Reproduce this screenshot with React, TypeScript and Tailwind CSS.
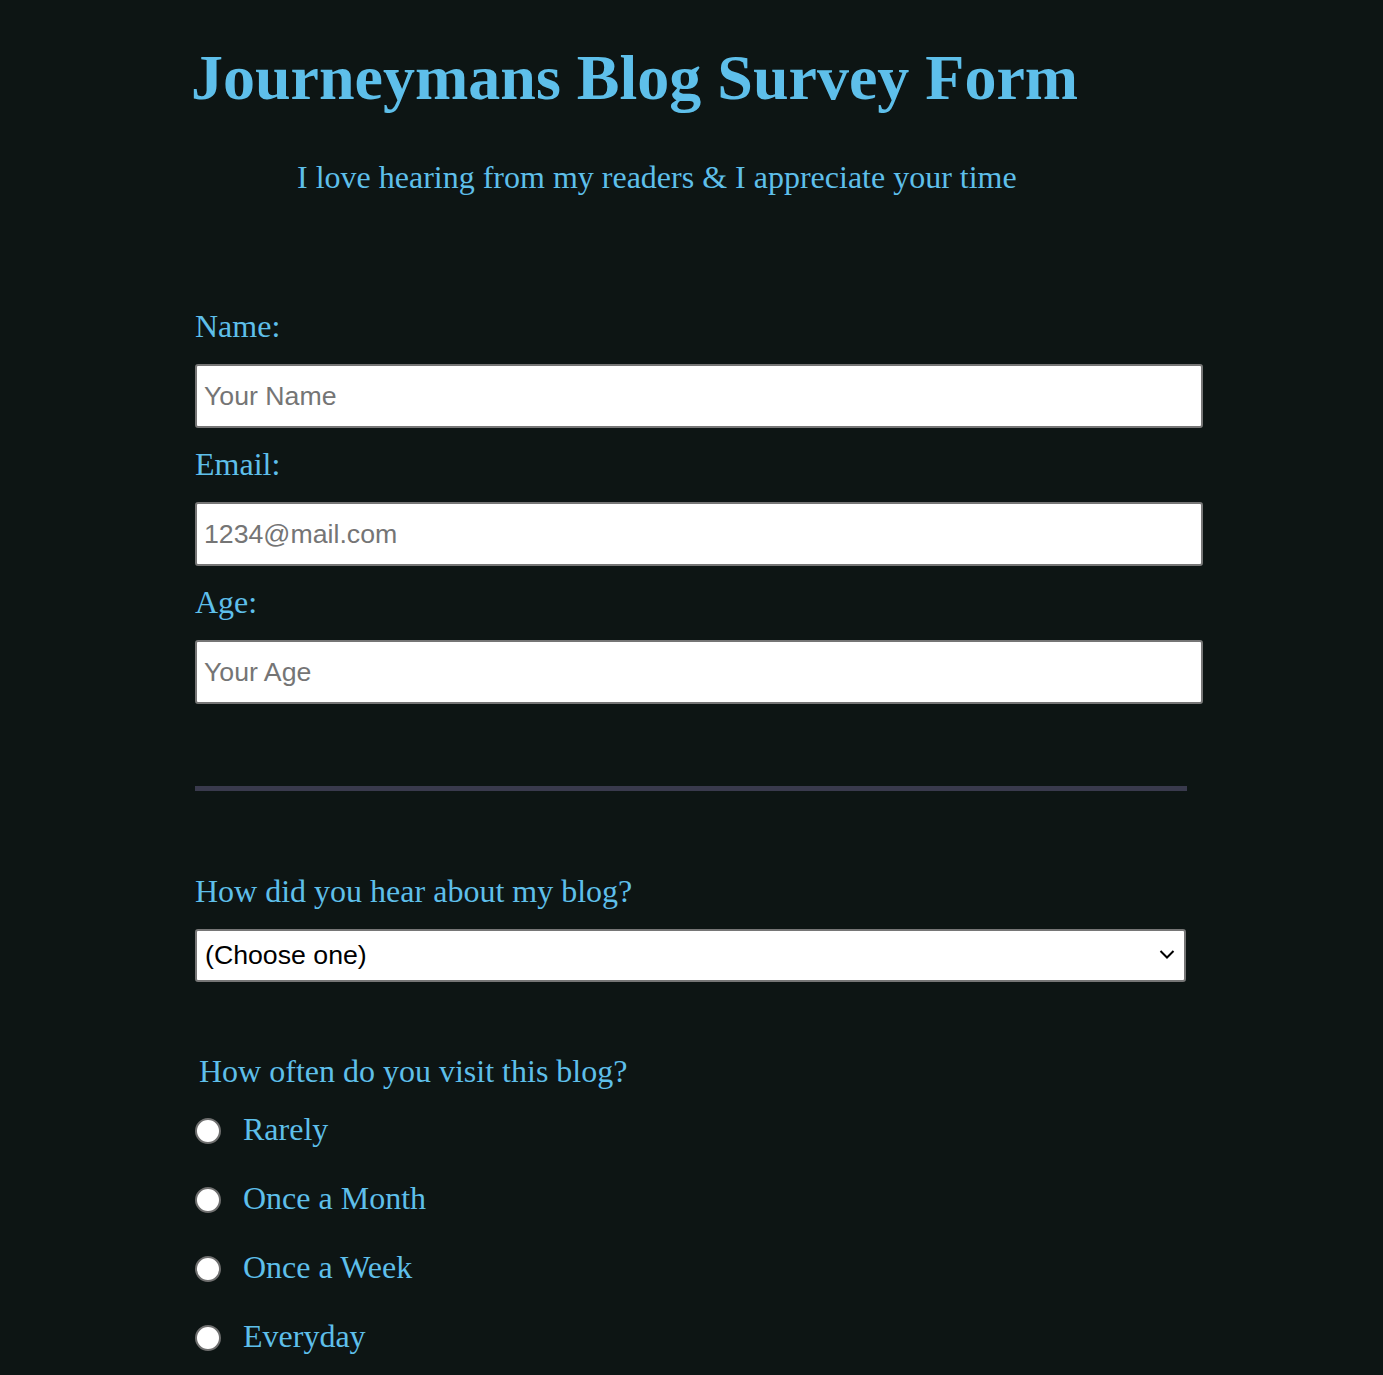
import React from 'react'

const serif = "font-['Liberation_Serif','Times_New_Roman',serif]"
const sans = "font-['Liberation_Sans',Arial,sans-serif]"

function Field({ label, placeholder, top }: { label: string; placeholder: string; top: string }) {
  return (
    <div className={top}>
      <label className={`${serif} block text-[32px] leading-[32px] text-[#5ebfea]`}>{label}</label>
      <input
        type="text"
        placeholder={placeholder}
        className={`${sans} mt-[22px] block h-[64px] w-[1008px] rounded-[3px] border-2 border-[#767676] bg-white px-[7px] text-[26.7px] text-black placeholder:text-[#757575] outline-none`}
      />
    </div>
  )
}

function Radio({ label }: { label: string }) {
  return (
    <label className="flex h-[69px] items-center">
      <span className="block h-[26px] w-[26px] rounded-full border-2 border-[#6f6f6f] bg-white" />
      <span className={`${serif} ml-[22px] text-[32px] leading-[32px] text-[#5ebfea] -mt-[4px]`}>{label}</span>
    </label>
  )
}

export default function App() {
  return (
    <div className="min-h-[1375px] bg-[#0d1514] pb-10">
      <h1 className={`${serif} pl-[191px] pt-[46px] text-[64px] leading-[64px] font-bold text-[#5ebfea]`}>
        Journeymans Blog Survey Form
      </h1>
      <p className={`${serif} mt-[51px] pl-[297px] text-[32px] leading-[32px] text-[#5ebfea]`}>
        I love hearing from my readers &amp; I appreciate your time
      </p>

      <form className="pl-[195px]">
        <Field label="Name:" placeholder="Your Name" top="mt-[117px]" />
        <Field label="Email:" placeholder="1234@mail.com" top="mt-[20px]" />
        <Field label="Age:" placeholder="Your Age" top="mt-[20px]" />

        <div className="mt-[82px] h-[5px] w-[992px] bg-[#393a4d]" />

        <div className={`${serif} mt-[84px] text-[32px] leading-[32px] text-[#5ebfea]`}>
          How did you hear about my blog?
        </div>
        <div className="relative mt-[22px] h-[53px] w-[991px] rounded-[3px] border-2 border-[#767676] bg-white">
          <div className={`${sans} pl-[8px] text-[26.7px] leading-[49px] text-black`}>(Choose one)</div>
          <svg
            className="absolute right-[9px] top-[17px]"
            width="16"
            height="12"
            viewBox="0 0 16 12"
            fill="none"
            stroke="black"
            strokeWidth="2"
          >
            <path d="M1.5 3l6.5 6.5 6.5-6.5" />
          </svg>
        </div>

        <div className={`${serif} mt-[73px] pl-[4px] text-[32px] leading-[32px] text-[#5ebfea]`}>
          How often do you visit this blog?
        </div>
        <div className="mt-[9px]">
          <Radio label="Rarely" />
          <Radio label="Once a Month" />
          <Radio label="Once a Week" />
          <Radio label="Everyday" />
        </div>
      </form>
    </div>
  )
}
